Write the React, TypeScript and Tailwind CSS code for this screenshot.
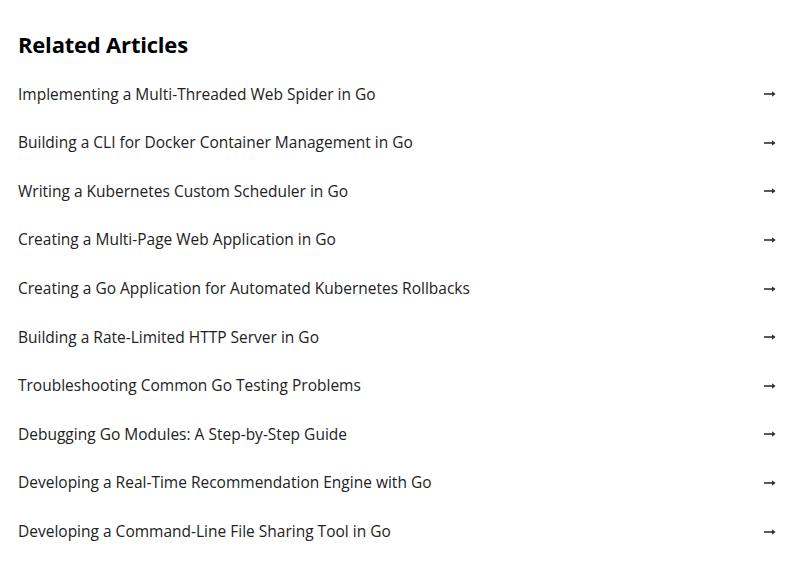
import React from 'react';

const articles = [
  'Implementing a Multi-Threaded Web Spider in Go',
  'Building a CLI for Docker Container Management in Go',
  'Writing a Kubernetes Custom Scheduler in Go',
  'Creating a Multi-Page Web Application in Go',
  'Creating a Go Application for Automated Kubernetes Rollbacks',
  'Building a Rate-Limited HTTP Server in Go',
  'Troubleshooting Common Go Testing Problems',
  'Debugging Go Modules: A Step-by-Step Guide',
  'Developing a Real-Time Recommendation Engine with Go',
  'Developing a Command-Line File Sharing Tool in Go',
];

const Arrow = () => (
  <svg width="12" height="8" viewBox="0 0 12 8" className="text-[#333]">
    <path d="M0 4h10.5" stroke="currentColor" strokeWidth="1.6" />
    <path d="M8 1.2L11.5 4L8 6.8z" fill="currentColor" />
  </svg>
);

const App = () => {
  return (
    <div
      className="w-[800px] h-[566px] bg-white text-black px-[18px] pt-[29px]"
      style={{ fontFamily: '"Open Sans", "Noto Sans", sans-serif' }}
    >
      <h2 className="text-[22px] leading-[30px] font-bold tracking-[-0.2px]">Related Articles</h2>
      <ul className="mt-[11px] pr-[6px]">
        {articles.map((title) => (
          <li key={title} className="flex items-center justify-between h-[48.6px]">
            <span className="text-[15.5px] text-[#222]">{title}</span>
            <Arrow />
          </li>
        ))}
      </ul>
    </div>
  );
};

export default App;
